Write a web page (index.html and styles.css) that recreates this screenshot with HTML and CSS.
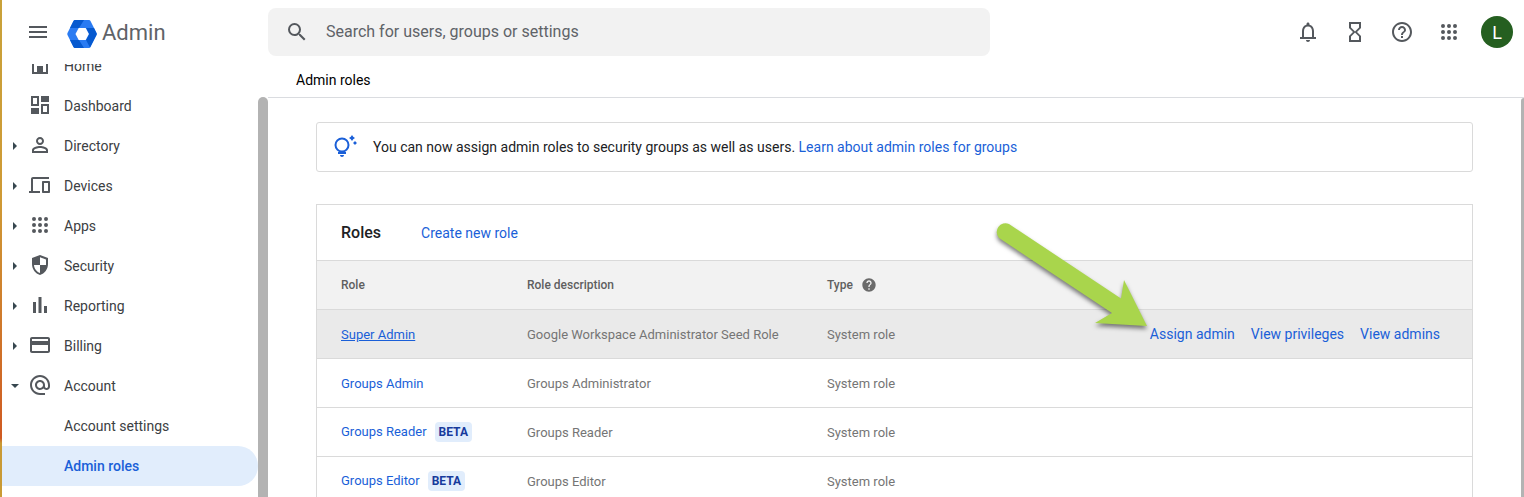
FILE: index.html
```
<!DOCTYPE html>
<html lang="en">
<head>
    <meta charset="UTF-8">
    <meta name="viewport" content="width=device-width, initial-scale=1.0">
    <title>Admin roles - Admin Console</title>
    <link rel="stylesheet" href="styles.css">
</head>
<body>

<header class="topbar">
    <div class="brand">
        <button type="button" class="icon-btn" aria-label="Main menu">
            <svg viewBox="0 0 24 24"><path d="M3 18h18v-2H3v2zm0-5h18v-2H3v2zm0-7v2h18V6H3z"/></svg>
        </button>
        <a href="#" class="logo">
            <svg class="logo-mark" viewBox="0 0 30 28">
                <path fill="#2a7bf2" d="M8 0h14q1 0 1.500 1l6 12q.500 1 0 2l-6 12q-.500 1-1.500 1H8q-1 0-1.500-1l-6-12q-.500-1 0-2l6-12Q7 0 8 0z"/>
                <path fill="#0659cf" d="M8 0h9l-5 8H3l3.500-7Q7 0 8 0z"/>
                <path fill="#0659cf" d="M19 8h8l2.500 5q.500 1 0 2l-6.500 12.500L19 20l3-6z"/>
                <path fill="#0659cf" d="M3 20h9l5 8H8q-1 0-1.500-1z"/>
                <path fill="#fff" d="M11.700 8h7l3.200 6-3.200 6h-7l-3.200-6z"/>
            </svg>
            <span>Admin</span>
        </a>
    </div>

    <form class="search">
        <svg viewBox="0 0 24 24"><path d="M15.500 14h-.790l-.280-.270A6.470 6.470 0 0 0 16 9.500 6.500 6.500 0 1 0 9.500 16c1.610 0 3.090-.590 4.230-1.570l.270.280v.790l5 4.990L20.490 19l-4.990-5zm-6 0C7.010 14 5 11.990 5 9.500S7.010 5 9.500 5 14 7.010 14 9.500 11.990 14 9.500 14z"/></svg>
        <input type="text" aria-label="Search" placeholder="Search for users, groups or settings">
    </form>

    <div class="tools">
        <button type="button" class="icon-btn" aria-label="Notifications">
            <svg viewBox="0 0 24 24"><path d="M18 17v-6c0-3.070-1.630-5.640-4.500-6.320V4c0-.830-.670-1.500-1.500-1.500s-1.500.670-1.500 1.500v.680C7.640 5.360 6 7.920 6 11v6H4v2h16v-2h-2zm-2 0H8v-6c0-2.480 1.510-4.500 4-4.500s4 2.020 4 4.500v6zm-4 5c1.100 0 2-.900 2-2h-4c0 1.100.890 2 2 2z"/></svg>
        </button>
        <button type="button" class="icon-btn" aria-label="Tasks">
            <svg viewBox="0 0 24 24"><path d="M6 2v6l4 4-4 4v6h12v-6l-4-4 4-4V2H6zm10 14.500V20H8v-3.500l4-4 4 4zm-4-5l-4-4V4h8v3.500l-4 4z"/></svg>
        </button>
        <button type="button" class="icon-btn" aria-label="Help">
            <svg viewBox="0 0 24 24"><path d="M11 18h2v-2h-2v2zm1-16C6.480 2 2 6.480 2 12s4.480 10 10 10 10-4.480 10-10S17.520 2 12 2zm0 18c-4.410 0-8-3.590-8-8s3.590-8 8-8 8 3.590 8 8-3.590 8-8 8zm0-14c-2.210 0-4 1.790-4 4h2c0-1.100.900-2 2-2s2 .900 2 2c0 2-3 1.750-3 5h2c0-2.250 3-2.500 3-5 0-2.210-1.790-4-4-4z"/></svg>
        </button>
        <button type="button" class="icon-btn" aria-label="Google apps">
            <svg viewBox="0 0 24 24"><path d="M6 8a2 2 0 1 0 0-4 2 2 0 0 0 0 4zm6 0a2 2 0 1 0 0-4 2 2 0 0 0 0 4zm6 0a2 2 0 1 0 0-4 2 2 0 0 0 0 4zM6 14a2 2 0 1 0 0-4 2 2 0 0 0 0 4zm6 0a2 2 0 1 0 0-4 2 2 0 0 0 0 4zm6 0a2 2 0 1 0 0-4 2 2 0 0 0 0 4zM6 20a2 2 0 1 0 0-4 2 2 0 0 0 0 4zm6 0a2 2 0 1 0 0-4 2 2 0 0 0 0 4zm6 0a2 2 0 1 0 0-4 2 2 0 0 0 0 4z"/></svg>
        </button>
        <button type="button" class="avatar" aria-label="Account">L</button>
    </div>
</header>

<div class="layout">
    <nav class="sidebar">
        <ul class="menu">
            <li><a href="#">
                <span class="arrow"></span>
                <svg viewBox="0 0 24 24"><path d="M12 3L4 9v12h16V9l-8-6zm6 16h-3v-6H9v6H6v-9l6-4.500 6 4.500v9z"/></svg>
                Home
            </a></li>
            <li><a href="#">
                <span class="arrow"></span>
                <svg viewBox="0 0 24 24"><path d="M3 3v10h8V3H3zm6 8H5V5h4v6zm4-8v6h8V3h-8zM3 21h8v-6H3v6zm10 0h8V11h-8v10zm2-8h4v6h-4v-6z"/></svg>
                Dashboard
            </a></li>
            <li><a href="#">
                <span class="arrow right"></span>
                <svg viewBox="0 0 24 24"><path d="M12 12c2.210 0 4-1.790 4-4s-1.790-4-4-4-4 1.790-4 4 1.790 4 4 4zm0-6c1.100 0 2 .900 2 2s-.900 2-2 2-2-.900-2-2 .900-2 2-2zm0 7c-2.670 0-8 1.340-8 4v3h16v-3c0-2.660-5.330-4-8-4zm6 5H6v-.990c.200-.720 3.300-2.010 6-2.010s5.800 1.290 6 2v1z"/></svg>
                Directory
            </a></li>
            <li><a href="#">
                <span class="arrow right"></span>
                <svg viewBox="0 0 24 24"><path d="M5 6h16V4H5c-1.100 0-2 .900-2 2v12H1v2h11v-2H5V6zm16 2h-6c-.550 0-1 .450-1 1v10c0 .550.450 1 1 1h6c.550 0 1-.450 1-1V9c0-.550-.450-1-1-1zm-1 10h-4v-8h4v8z"/></svg>
                Devices
            </a></li>
            <li><a href="#">
                <span class="arrow right"></span>
                <svg viewBox="0 0 24 24"><path d="M6 8a2 2 0 1 0 0-4 2 2 0 0 0 0 4zm6 0a2 2 0 1 0 0-4 2 2 0 0 0 0 4zm6 0a2 2 0 1 0 0-4 2 2 0 0 0 0 4zM6 14a2 2 0 1 0 0-4 2 2 0 0 0 0 4zm6 0a2 2 0 1 0 0-4 2 2 0 0 0 0 4zm6 0a2 2 0 1 0 0-4 2 2 0 0 0 0 4zM6 20a2 2 0 1 0 0-4 2 2 0 0 0 0 4zm6 0a2 2 0 1 0 0-4 2 2 0 0 0 0 4zm6 0a2 2 0 1 0 0-4 2 2 0 0 0 0 4z"/></svg>
                Apps
            </a></li>
            <li><a href="#">
                <span class="arrow right"></span>
                <svg viewBox="0 0 24 24"><path d="M12 2L4 5v6.090c0 5.050 3.410 9.760 8 10.910 4.590-1.150 8-5.860 8-10.910V5l-8-3zm6 9.090V12h-6v7.930c-3.450-1.130-5.870-4.530-6-7.930h6V4.140l6 2.250v4.700z"/></svg>
                Security
            </a></li>
            <li><a href="#">
                <span class="arrow right"></span>
                <svg viewBox="0 0 24 24"><path d="M5 9h3v11H5zM10.500 4h3v16h-3zM16 13h3v7h-3z"/></svg>
                Reporting
            </a></li>
            <li><a href="#">
                <span class="arrow right"></span>
                <svg viewBox="0 0 24 24"><path d="M20 4H4c-1.110 0-1.990.890-1.990 2L2 18c0 1.110.890 2 2 2h16c1.110 0 2-.890 2-2V6c0-1.110-.890-2-2-2zm0 14H4v-6h16v6zm0-10H4V6h16v2z"/></svg>
                Billing
            </a></li>
            <li><a href="#">
                <span class="arrow down"></span>
                <svg viewBox="0 0 24 24"><path d="M12 2C6.480 2 2 6.480 2 12s4.480 10 10 10h5v-2h-5c-4.340 0-8-3.660-8-8s3.660-8 8-8 8 3.660 8 8v1.430c0 .790-.710 1.570-1.500 1.570s-1.500-.780-1.500-1.570V12c0-2.760-2.240-5-5-5s-5 2.240-5 5 2.240 5 5 5c1.380 0 2.640-.560 3.540-1.470.650.890 1.770 1.470 2.960 1.470 1.970 0 3.500-1.600 3.500-3.570V12c0-5.520-4.480-10-10-10zm0 13c-1.660 0-3-1.340-3-3s1.340-3 3-3 3 1.340 3 3-1.340 3-3 3z"/></svg>
                Account
            </a></li>
            <li><a href="#" class="sub">Account settings</a></li>
            <li><a href="#" class="sub active">Admin roles</a></li>
        </ul>
    </nav>
    <div class="sidebar-scroll"></div>

    <main class="main">
        <div class="breadcrumb">Admin roles</div>
        <div class="scroller">
            <div class="content">
                <div class="notice">
                    <svg viewBox="0 0 24 24">
                        <circle cx="9" cy="10" r="6.500" fill="none" stroke="#1a5fd8" stroke-width="2"/>
                        <path d="M5 17h8v2H5zM7 20h4c0 1.100-.900 2-2 2s-2-.900-2-2zM19 0l1.200 1.800L22 3l-1.800 1.200L19 6l-1.200-1.800L16 3l1.800-1.200zM22 6l.900 1.100L24 8l-1.100.900L22 10l-.900-1.100L20 8l1.100-.900z"/>
                    </svg>
                    <p>You can now assign admin roles to security groups as well as users. <a href="#">Learn about admin roles for groups</a></p>
                </div>

                <section class="card">
                    <div class="card-head">
                        <h2>Roles</h2>
                        <a href="#">Create new role</a>
                    </div>
                    <table class="roles">
                        <thead>
                            <tr>
                                <th class="col-role">Role</th>
                                <th class="col-desc">Role description</th>
                                <th class="col-type">
                                    <span class="type-label">Type
                                        <svg viewBox="0 0 24 24"><path d="M12 2C6.480 2 2 6.480 2 12s4.480 10 10 10 10-4.480 10-10S17.520 2 12 2zm1 17h-2v-2h2v2zm2.070-7.750l-.900.920C13.450 12.900 13 13.500 13 15h-2v-.500c0-1.100.450-2.100 1.170-2.830l1.240-1.260c.370-.360.590-.860.590-1.410 0-1.100-.900-2-2-2s-2 .900-2 2H8c0-2.210 1.790-4 4-4s4 1.790 4 4c0 .880-.360 1.680-.930 2.250z"/></svg>
                                    </span>
                                </th>
                                <th></th>
                            </tr>
                        </thead>
                        <tbody>
                            <tr class="hover">
                                <td><a href="#">Super Admin</a></td>
                                <td>Google Workspace Administrator Seed Role</td>
                                <td>System role</td>
                                <td class="col-actions">
                                    <div class="actions">
                                        <a href="#">Assign admin</a>
                                        <a href="#">View privileges</a>
                                        <a href="#">View admins</a>
                                        <svg class="pointer" viewBox="0 0 168 128"><path d="M25 12L137 86.500 140 68l23 46-52-3 17-10L15 26A8.800 8.800 0 0 1 25 12z"/></svg>
                                    </div>
                                </td>
                            </tr>
                            <tr>
                                <td><a href="#">Groups Admin</a></td>
                                <td>Groups Administrator</td>
                                <td>System role</td>
                                <td></td>
                            </tr>
                            <tr>
                                <td class="with-badge"><a href="#">Groups Reader</a><span class="badge">BETA</span></td>
                                <td>Groups Reader</td>
                                <td>System role</td>
                                <td></td>
                            </tr>
                            <tr>
                                <td class="with-badge"><a href="#">Groups Editor</a><span class="badge">BETA</span></td>
                                <td>Groups Editor</td>
                                <td>System role</td>
                                <td></td>
                            </tr>
                        </tbody>
                    </table>
                </section>
            </div>
            <div class="main-scroll"></div>
        </div>
    </main>
</div>

</body>
</html>
```

FILE: styles.css
```
* {
    box-sizing: border-box;
}
body {
    margin: 0;
    height: 100vh;
    display: flex;
    flex-direction: column;
    overflow: hidden;
    background-color: #fff;
    border-left: 2px solid;
    border-image: linear-gradient(#c9a23a, #cf9a35 40%, #cf5a22 88%, #c99a35 89%) 1;
    font-family: Roboto, Arial, sans-serif;
    font-size: 14px;
    line-height: 20px;
    color: #202124;
}
a {
    color: #1a5fd8;
    text-decoration: none;
}
svg {
    width: 24px;
    height: 24px;
    flex: none;
    fill: #54585d;
}
button {
    padding: 0;
    border: none;
    background: none;
    font-family: inherit;
}

/* top bar */
.topbar {
    display: flex;
    align-items: center;
    height: 64px;
    flex: none;
    padding-right: 11px;
}
.brand {
    display: flex;
    align-items: center;
    gap: 17px;
    width: 266px;
    flex: none;
    padding-left: 24px;
}
.icon-btn {
    width: 24px;
    height: 24px;
}
.logo {
    display: flex;
    align-items: center;
    gap: 5px;
    padding-top: 3px;
    font-size: 22px;
    line-height: 24px;
    color: #5f6368;
}
.logo span {
    padding-bottom: 2px;
}
.logo .logo-mark {
    width: 30px;
    height: 28px;
}
.search {
    display: flex;
    align-items: center;
    gap: 17px;
    flex: 0 1 722px;
    height: 48px;
    padding: 0 17px;
    border-radius: 8px;
    background-color: #f2f2f2;
}
.search input {
    flex: 1;
    padding: 0 0 2px;
    border: none;
    outline: none;
    background: none;
    font-family: inherit;
    font-size: 16px;
}
.search input::placeholder {
    color: #5f6368;
    opacity: 1;
}
.tools {
    display: flex;
    align-items: center;
    gap: 23px;
    margin-left: auto;
}
.avatar {
    width: 32px;
    height: 32px;
    margin-left: -3px;
    border-radius: 50%;
    background-color: #255f20;
    color: #fff;
    font-size: 18px;
}

/* sidebar */
.layout {
    display: flex;
    flex: 1;
    min-height: 0;
}
.sidebar {
    width: 256px;
    flex: none;
    overflow: hidden;
}
.menu {
    list-style: none;
    margin: -18px 0 0;
    padding: 0;
}
.menu a {
    display: flex;
    align-items: center;
    height: 40px;
    color: #3c4043;
}
.menu svg {
    margin: 0 12px 2px 0;
}
.arrow {
    width: 17px;
    margin-right: 9px;
    display: flex;
    justify-content: flex-end;
}
.arrow.right::after {
    content: "";
    margin-right: 2px;
    border-left: 4px solid #37474f;
    border-top: 4px solid transparent;
    border-bottom: 4px solid transparent;
}
.arrow.down::after {
    content: "";
    border-top: 4px solid #37474f;
    border-left: 4px solid transparent;
    border-right: 4px solid transparent;
}
.menu .sub {
    padding-left: 62px;
}
.menu .active {
    border-radius: 0 20px 20px 0;
    background-color: #e1edfc;
    color: #1a5fd8;
    font-weight: 500;
}
.sidebar-scroll {
    width: 10px;
    flex: none;
    margin-top: 33px;
    border-radius: 5px 5px 0 0;
    background-color: #b3b3b3;
}

/* main area */
.main {
    flex: 1;
    min-width: 0;
    display: flex;
    flex-direction: column;
}
.breadcrumb {
    flex: none;
    padding: 6px 28px 7px;
    border-bottom: 1px solid #dadce0;
    color: #000;
}
.scroller {
    flex: 1;
    min-height: 0;
    display: flex;
}
.content {
    flex: 1;
    min-width: 0;
    padding: 24px 48px;
}
.main-scroll {
    width: 3px;
    flex: none;
    border-radius: 3px 0 0 0;
    background-color: #b3b3b3;
}
.notice {
    display: flex;
    align-items: center;
    gap: 16px;
    height: 50px;
    margin-bottom: 32px;
    padding: 0 16px;
    border: 1px solid #dadada;
    border-radius: 3px;
}
.notice svg {
    fill: #1a5fd8;
}
.notice p {
    margin: 0;
}

/* roles table */
.card {
    border: 1px solid #dadada;
}
.card-head {
    display: flex;
    align-items: center;
    gap: 40px;
    height: 55px;
    padding: 0 24px;
}
.card-head h2 {
    margin: 0;
    font-size: 16px;
    font-weight: 500;
}
.roles {
    width: 100%;
    border-collapse: separate;
    border-spacing: 0;
    table-layout: fixed;
}
.roles th,
.roles td {
    height: 49px;
    padding: 0;
    border-top: 1px solid #dadada;
    text-align: left;
    font-size: 13px;
    color: #757575;
}
.roles td {
    padding-top: 2px;
}
.roles .with-badge {
    padding-top: 0;
}
.roles th {
    background-color: #f2f2f2;
    font-size: 12px;
    font-weight: 500;
    color: #5f5f5f;
}
.roles th:first-child,
.roles td:first-child {
    padding-left: 24px;
}
.col-role {
    width: 210px;
}
.col-desc {
    width: 300px;
}
.col-type {
    width: 160px;
}
.type-label {
    display: flex;
    align-items: center;
    gap: 8px;
}
.type-label svg {
    width: 16px;
    height: 16px;
    fill: #6b6b6b;
}
.hover td {
    background-color: #eaeaea;
}
.hover td:first-child a {
    text-decoration: underline;
}
.roles .col-actions {
    padding-top: 0;
    padding-right: 32px;
    font-size: 14px;
}
.actions {
    position: relative;
    display: flex;
    gap: 16px;
    width: max-content;
    margin-left: auto;
}
.badge {
    display: inline-block;
    margin-left: 8px;
    padding: 0 4px;
    border-radius: 4px;
    background-color: #e1edfc;
    color: #173b9c;
    font-size: 12px;
    font-weight: 700;
}
.pointer {
    position: absolute;
    right: calc(100% - 2px);
    bottom: 4px;
    width: 168px;
    height: 128px;
    fill: #a9d54c;
    filter: drop-shadow(0 3px 2px rgba(0, 0, 0, 0.5));
}
```
